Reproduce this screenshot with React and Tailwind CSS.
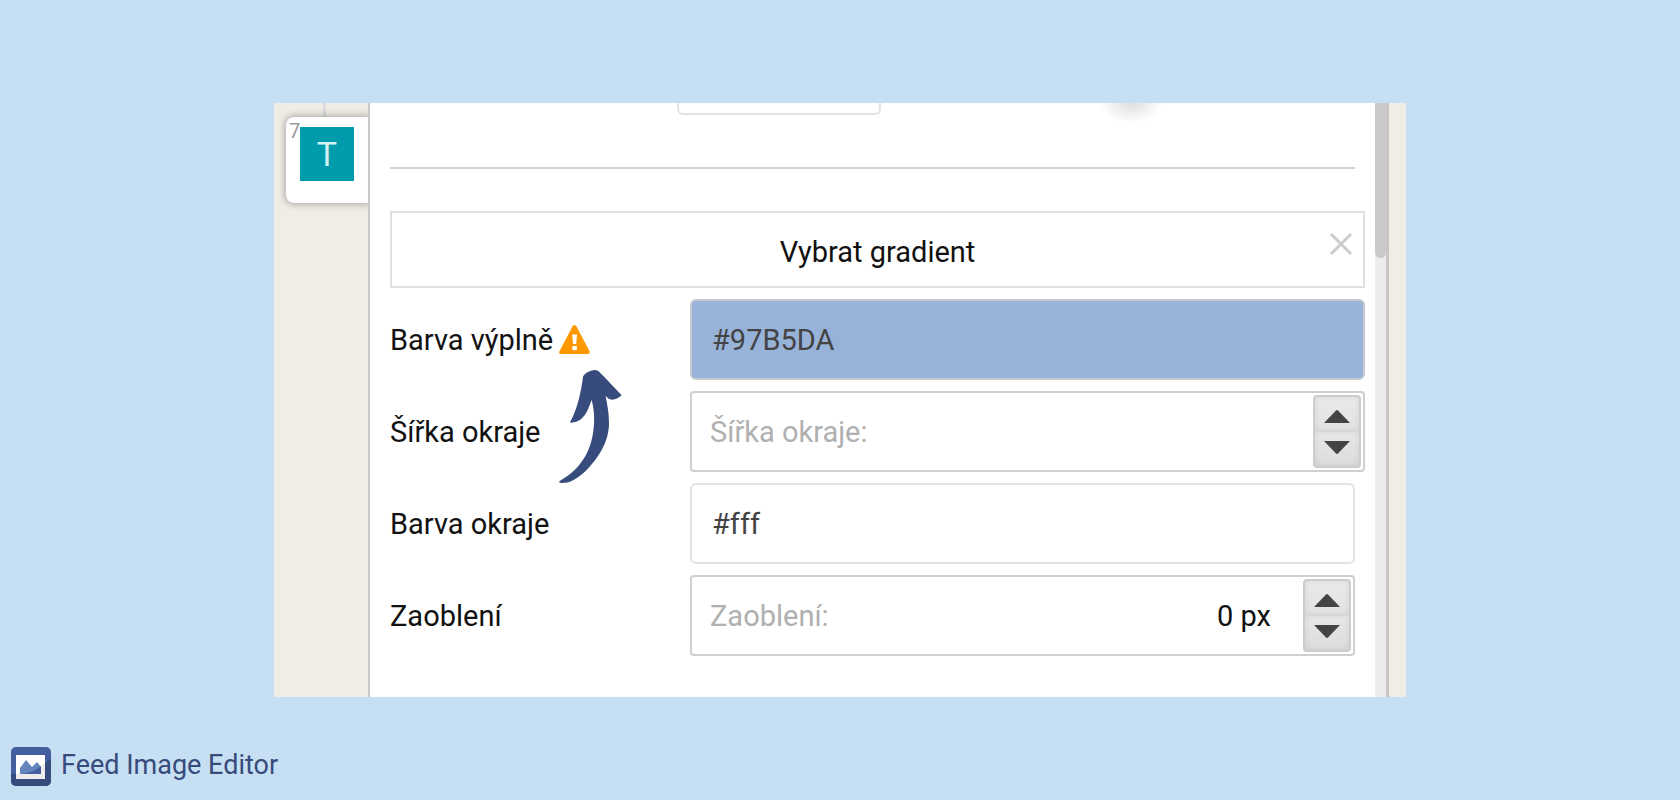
import { useState } from "react";

const Spinner = ({ label }) => (
    <div className="flex flex-col w-12 h-[73px] shrink-0 rounded border-2 border-[#cdcdcd] bg-[#e3e3e3] overflow-hidden">
        <button type="button" aria-label={`${label} +`} className="flex-1 flex items-center justify-center pt-1 border-b border-[#d4d4d4] bg-linear-to-b from-[#ebebeb] to-[#e1e1e1] shadow-[inset_0_0_6px_rgba(0,0,0,0.08)]">
            <svg width="26" height="13" viewBox="0 0 26 13" fill="#444">
                <path d="M0 13 12 .5Q13-.3 14 .5L26 13Z" />
            </svg>
        </button>
        <button type="button" aria-label={`${label} -`} className="flex-1 flex items-center justify-center pb-1 bg-linear-to-b from-[#e8e8e8] to-[#dcdcdc] shadow-[inset_0_0_6px_rgba(0,0,0,0.08)]">
            <svg width="26" height="13" viewBox="0 0 26 13" fill="#444">
                <path d="M0 0H26L14 12.5Q13 13.3 12 12.5Z" />
            </svg>
        </button>
    </div>
);

const Row = ({ id, label, extra, short, children }) => (
    <div className={short ? "relative grid grid-cols-[300px_1fr] items-center pr-[10px]" : "relative grid grid-cols-[300px_1fr] items-center"}>
        <div className="flex items-center gap-[6px]">
            <label htmlFor={id}>{label}</label>
            {extra}
        </div>
        {children}
    </div>
);

const WarningIcon = () => (
    <svg width="31" height="29" viewBox="0 0 31 29" aria-hidden="true">
        <path d="M13.6 1.2Q15.5-1 17.4 1.2L30.7 26.4Q31.3 28.8 29 29H2Q-.3 28.8.3 26.4Z" fill="#ff9800" />
        <path d="M13.2 9.5H18L17.2 19H14Z" fill="#fff" />
        <rect x="13.3" y="21" width="4.6" height="4.2" rx="1" fill="#fff" />
    </svg>
);

const Arrow = () => (
    <svg className="absolute left-[167px] top-[69px] z-10 pointer-events-none" width="66" height="116" viewBox="531 234 198 348" aria-hidden="true">
        <path
            fill="#374b7c"
            d="M538 574C590 545 628 500 639 430C645 395 643 360 635 330C624 356 616 395 574 398C569 399 570 394 574 389C594 350 604 300 609 260C613 250 632 240 646 240C654 240 660 248 665 253L725 316C714 326 700 332 690 328C684 326 680 321 677 318C682 345 687 370 687 400C687 455 655 505 620 540C590 568 570 580 545 579C538 579 536 576 538 574Z"
        />
    </svg>
);

const Logo = () => (
    <svg width="40" height="40" viewBox="0 0 40 40" aria-hidden="true">
        <defs>
            <clipPath id="logo-frame">
                <rect width="40" height="39" rx="5" />
            </clipPath>
        </defs>
        <g clipPath="url(#logo-frame)">
            <rect width="40" height="40" fill="#435f9f" />
            <path d="M0 27C16 27 31 22 40 11V40H0Z" fill="#374b7c" />
        </g>
        <rect x="5" y="8" width="29" height="24" fill="#fff" />
        <path d="M5 27C16 27 27 23 34 16V32H5Z" fill="#ececec" />
        <path d="M9 27V21L15 13 21 20 26 15 30 20V27Z" fill="#6484bd" />
        <path d="M11 27C19 26 25 23 30 19V27Z" fill="#435f9f" />
    </svg>
);

const App = () => {
    const [fill, setFill] = useState("#97B5DA");
    const [border, setBorder] = useState("#fff");

    return (
        <div className="min-h-screen flex flex-col bg-[#c7dff2] pt-[103px] font-[Roboto,sans-serif]">
            <main className="mx-[274px] flex bg-[#f0ede6] overflow-hidden text-[29px] leading-9 text-[#111]">
                <aside className="w-[94px] shrink-0 pl-3">
                    <div className="ml-[37px] w-[3px] h-[14px] bg-[#dddcdd]" />
                    <button type="button" className="flex items-start w-full h-[86px] rounded-l-lg bg-white pl-[3px] pt-[10px] shadow-[0_0_6px_2px_rgba(0,0,0,0.25)]">
                        <span className="w-[11px] -mt-2 text-xl leading-6 text-[#999]">7</span>
                        <span className="size-[54px] flex items-center justify-center bg-[#009cac] text-[34px] text-[#d5f0f2]">T</span>
                    </button>
                </aside>

                <section className="relative flex-1 flex border-l-2 border-[#c9c7c3] bg-white">
                    <div className="flex-1 pl-5 pr-[10px] pb-[41px]">
                        <div className="flex h-16">
                            <div className="ml-[287px] w-[204px] h-3 shrink-0 rounded-b-md border-2 border-t-0 border-[#e2e2e2]" />
                            <div className="ml-[217px] w-[66px] h-5 bg-[radial-gradient(32px_20px_at_50%_0%,rgba(0,0,0,0.13),transparent)]" />
                        </div>
                        <hr className="mr-[10px] border-t-2 border-[#d3d3c8]" />

                        <div className="flex flex-col gap-[11px] pt-[42px]">
                            <div className="relative flex">
                                <button type="button" className="flex-1 h-[77px] pt-1 border-2 border-[#e0e0e0]">
                                    Vybrat gradient
                                </button>
                                <button type="button" aria-label="Zrušit gradient" className="absolute right-3 top-[21px]">
                                    <svg width="24" height="24" viewBox="0 0 24 24" stroke="#ccc" strokeWidth="3">
                                        <path d="M2 2 22 22M22 2 2 22" />
                                    </svg>
                                </button>
                            </div>

                            <Row id="fill" label="Barva výplně" extra={<WarningIcon />}>
                                <input
                                    id="fill"
                                    value={fill}
                                    onChange={(e) => setFill(e.target.value)}
                                    className="w-full h-[81px] rounded-md border-2 border-[#c5cad1] bg-[#97b3da] px-5 text-[#444]"
                                />
                                <Arrow />
                            </Row>

                            <Row id="border-width" label="Šířka okraje">
                                <div className="flex h-[81px] rounded border-2 border-[#d0d0d0] p-[2px]">
                                    <input id="border-width" placeholder="Šířka okraje:" className="flex-1 min-w-0 pl-4 placeholder:text-[#b0b0b0]" />
                                    <Spinner label="Šířka okraje" />
                                </div>
                            </Row>

                            <Row id="border-color" label="Barva okraje" short>
                                <input
                                    id="border-color"
                                    value={border}
                                    onChange={(e) => setBorder(e.target.value)}
                                    className="w-full h-[81px] rounded-md border-2 border-[#e2e2e2] bg-white px-5 text-[#444]"
                                />
                            </Row>

                            <Row id="radius" label="Zaoblení" short>
                                <div className="flex items-center h-[81px] rounded border-2 border-[#d0d0d0] p-[2px]">
                                    <input id="radius" placeholder="Zaoblení:" className="flex-1 min-w-0 pl-4 placeholder:text-[#b0b0b0]" />
                                    <output htmlFor="radius" className="pr-8">0 px</output>
                                    <Spinner label="Zaoblení" />
                                </div>
                            </Row>
                        </div>
                    </div>

                    {/* Scrollbar */}
                    <div className="w-[11px] bg-[#ececec]">
                        <div className="h-[155px] rounded-b-md bg-[#cacaca]" />
                    </div>
                </section>
                <div className="w-5 shrink-0 border-l-3 border-[#c9c5c0]" />
            </main>

            <footer className="mt-auto flex items-start gap-[10px] pl-[11px] pt-[50px] pb-[13px]">
                <Logo />
                <span className="text-[27px] leading-9 text-[#374b7c]">Feed Image Editor</span>
            </footer>
        </div>
    );
};

export default App;
